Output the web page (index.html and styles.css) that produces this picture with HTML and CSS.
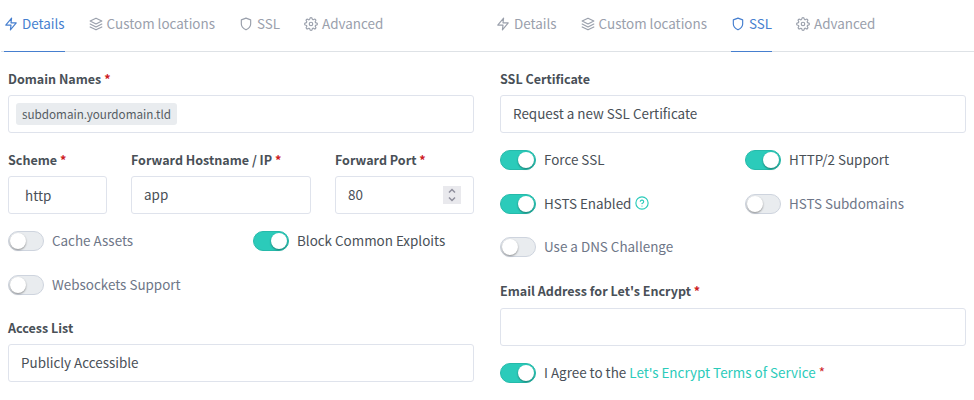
FILE: index.html
```html
<!DOCTYPE html>
<html lang="en">
<head>
<meta charset="utf-8">
<title>Proxy Host</title>
<link rel="stylesheet" href="styles.css">
</head>
<body>
<svg class="defs" width="0" height="0">
  <symbol id="zap" viewBox="0 0 24 24"><path d="M13 2 3 14h9l-1 8 10-12h-9z"/></symbol>
  <symbol id="layers" viewBox="0 0 24 24"><path d="M12 2 2 7l10 5 10-5zM2 17l10 5 10-5M2 12l10 5 10-5"/></symbol>
  <symbol id="shield" viewBox="0 0 24 24"><path d="M12 22s8-4 8-10V5l-8-3-8 3v7c0 6 8 10 8 10z"/></symbol>
  <symbol id="gear" viewBox="0 0 24 24"><circle cx="12" cy="12" r="3"/><path d="M19.4 15a1.65 1.65 0 0 0 .33 1.82l.06.06a2 2 0 0 1-2.83 2.83l-.06-.06a1.65 1.65 0 0 0-1.82-.33 1.65 1.65 0 0 0-1 1.51V21a2 2 0 0 1-4 0v-.09A1.65 1.65 0 0 0 9 19.4a1.65 1.65 0 0 0-1.82.33l-.06.06a2 2 0 0 1-2.83-2.83l.06-.06a1.65 1.65 0 0 0 .33-1.82 1.65 1.65 0 0 0-1.51-1H3a2 2 0 0 1 0-4h.09A1.65 1.65 0 0 0 4.6 9a1.65 1.65 0 0 0-.33-1.82l-.06-.06a2 2 0 0 1 2.83-2.83l.06.06a1.65 1.65 0 0 0 1.82.33H9a1.65 1.65 0 0 0 1-1.51V3a2 2 0 0 1 4 0v.09a1.65 1.65 0 0 0 1 1.51 1.65 1.65 0 0 0 1.82-.33l.06-.06a2 2 0 0 1 2.83 2.83l-.06.06a1.65 1.65 0 0 0-.33 1.82V9a1.65 1.65 0 0 0 1.51 1H21a2 2 0 0 1 0 4h-.09a1.65 1.65 0 0 0-1.51 1z"/></symbol>
  <symbol id="help" viewBox="0 0 24 24"><circle cx="12" cy="12" r="10.5"/><path d="M9.09 9a3 3 0 0 1 5.83 1c0 2-3 3-3 3M12 17.3h.01"/></symbol>
</svg>
<main class="page">
  <section class="panel">
    <nav class="tabs">
      <a class="tab active"><svg class="icon"><use href="#zap"/></svg><span>Details</span></a>
      <a class="tab"><svg class="icon"><use href="#layers"/></svg><span>Custom locations</span></a>
      <a class="tab"><svg class="icon"><use href="#shield"/></svg><span>SSL</span></a>
      <a class="tab"><svg class="icon"><use href="#gear"/></svg><span>Advanced</span></a>
    </nav>
    <div class="body">
      <div class="field domain"><label>Domain Names <i>*</i></label><div class="control tags"><span class="tag">subdomain.yourdomain.tld</span></div></div>
      <div class="forward">
        <div class="field"><label>Scheme <i>*</i></label><div class="control select">http</div></div>
        <div class="field"><label>Forward Hostname / IP <i>*</i></label><div class="control">app</div></div>
        <div class="field"><label>Forward Port <i>*</i></label><div class="control number"><span>80</span><svg class="spinner" viewBox="0 0 18 18"><path d="m6 6.5 3-3 3 3m-6 5 3 3 3-3"/></svg></div></div>
      </div>
      <div class="switches left">
        <div class="switch"><b></b><span>Cache Assets</span></div>
        <div class="switch on"><b></b><span>Block Common Exploits</span></div>
        <div class="switch"><b></b><span>Websockets Support</span></div>
      </div>
      <div class="field access"><label>Access List</label><div class="control">Publicly Accessible</div></div>
    </div>
  </section>
  <section class="panel">
    <nav class="tabs">
      <a class="tab"><svg class="icon"><use href="#zap"/></svg><span>Details</span></a>
      <a class="tab"><svg class="icon"><use href="#layers"/></svg><span>Custom locations</span></a>
      <a class="tab active"><svg class="icon"><use href="#shield"/></svg><span>SSL</span></a>
      <a class="tab"><svg class="icon"><use href="#gear"/></svg><span>Advanced</span></a>
    </nav>
    <div class="body">
      <div class="field certificate"><label>SSL Certificate</label><div class="control">Request a new SSL Certificate</div></div>
      <div class="switches right">
        <div class="switch on"><b></b><span>Force SSL</span></div>
        <div class="switch on"><b></b><span>HTTP/2 Support</span></div>
        <div class="switch on"><b></b><span>HSTS Enabled</span><svg class="icon help"><use href="#help"/></svg></div>
        <div class="switch"><b></b><span>HSTS Subdomains</span></div>
        <div class="switch"><b></b><span>Use a DNS Challenge</span></div>
      </div>
      <div class="field email"><label>Email Address for Let's Encrypt <i>*</i></label><div class="control"></div></div>
      <div class="switch on"><b></b><span>I Agree to the <a>Let's Encrypt Terms of Service</a> <i>*</i></span></div>
    </div>
  </section>
</main>
</body>
</html>
```
FILE: styles.css
```css
* { box-sizing: border-box; }
body {
  margin: 0;
  background: #fff;
  color: #495057;
  font: 13.43px/20px "Noto Sans CJK SC", sans-serif;
}
.defs { display: block; height: 0; }
i { color: #cd201f; font-style: normal; }
.page { display: grid; grid-template-columns: 482px 482px; column-gap: 10px; }
.tabs {
  display: flex;
  gap: 24px;
  height: 52px;
  margin-left: 1px;
  padding-left: 3px;
  border-bottom: 1px solid #dee2e6;
}
.panel + .panel .tabs { margin-left: -10px; padding-left: 14px; }
.tab {
  display: flex;
  align-items: center;
  gap: 4px;
  height: 52px;
  padding-bottom: 3px;
  color: #9aa0ac;
  border-bottom: 1px solid transparent;
}
.tab span { position: relative; top: -1px; }
.tab.active { color: #467fcf; border-bottom-color: #467fcf; }
.icon {
  width: 14px;
  height: 14px;
  fill: none;
  stroke: currentColor;
  stroke-width: 2;
  stroke-linecap: round;
  stroke-linejoin: round;
}
.body { padding: 17px 8px 0; }
.field label {
  display: block;
  height: 26px;
  font-size: 12.54px;
  font-weight: 700;
}
.control {
  display: flex;
  align-items: center;
  height: 38px;
  padding: 0 12px 2px;
  border: 1px solid #dfe3ec;
  border-radius: 3px;
}
.tags { padding: 0 7px; }
.tag {
  padding: 0 6px;
  height: 22px;
  line-height: 21px;
  font-size: 11.68px;
  color: #555c63;
  background: #e9ecef;
  border-radius: 3px;
}
.domain { margin-bottom: 17px; }
.forward { display: grid; grid-template-columns: 99px 180px 139px; gap: 24px; margin-bottom: 17px; }
.select { padding: 0 16px; }
.number { justify-content: space-between; }
.spinner { width: 18px; height: 18px; margin-top: 2px; background: #e9e9ed; fill: none; stroke: #8f8f9d; stroke-width: 1.5; }
.switches { display: grid; grid-template-columns: 245px 1fr; row-gap: 24px; }
.switch { display: flex; align-items: center; height: 20px; color: #6e7687; }
.switch b {
  width: 36px;
  height: 20px;
  margin-right: 8px;
  padding: 1px;
  background: #e9ecef;
  border: 1px solid #ced4de;
  border-radius: 10px;
}
.switch b::before {
  content: "";
  display: block;
  width: 16px;
  height: 16px;
  border-radius: 50%;
  background: #fff;
  box-shadow: 0 1px 2px rgba(0, 0, 0, .4);
}
.switch span { position: relative; top: -1px; }
.switch.on { color: #495057; }
.switch.on b { background: #2bcbba; border-color: #26baaa; }
.switch.on b::before { margin-left: 16px; }
.switch a, .help { color: #2bcbba; }
.help { margin: -2px 0 0 4px; }
.access { margin-top: 23px; }
.certificate { margin-bottom: 17px; }
.right { grid-auto-rows: 20px; row-gap: 23.5px; }
.email { margin: 24px 0 17px; }
.email label { height: 27px; }
```
